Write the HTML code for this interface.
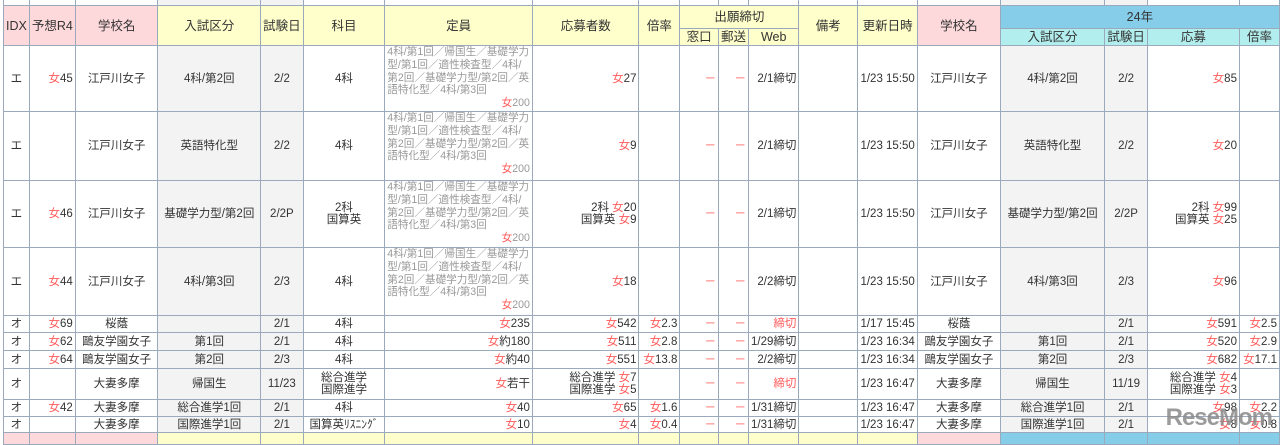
<!DOCTYPE html>
<html><head><meta charset="utf-8"><style>
body{margin:0;width:1280px;height:436px;overflow:hidden;background:#fff;position:relative;font-family:"Liberation Sans","Noto Sans CJK JP",sans-serif;}
table{position:absolute;left:3px;top:-10px;border-collapse:collapse;table-layout:fixed;font-size:11.5px;color:#333;}
td{border:1px solid #9ba9bd;padding:0 2px;text-align:center;vertical-align:middle;overflow:hidden;white-space:nowrap;line-height:12px;}
.h{font-size:12.5px;}
.p{background:#fdd9dc}.y{background:#ffffcc}.b{background:#86cdea}.c{background:#b3eeee}.g{background:#f3f3f3}
.r{text-align:right}.f{color:#ff5a5a}
.t{color:#999;text-align:left;white-space:normal;vertical-align:top;padding:0 2px;font-size:10.6px;line-height:12.8px;}
.t div{text-align:right}
.logo{position:absolute;right:8px;bottom:4px;font:bold 24px "Liberation Sans",sans-serif;color:#8a8a8a;opacity:.85;letter-spacing:-1px}
</style></head><body>
<table>
<colgroup><col style="width:25px"><col style="width:44px"><col style="width:83px"><col style="width:103px"><col style="width:42px"><col style="width:82px"><col style="width:152px"><col style="width:108px"><col style="width:41px"><col style="width:39px"><col style="width:28px"><col style="width:47px"><col style="width:60px"><col style="width:60px"><col style="width:83px"><col style="width:105px"><col style="width:40px"><col style="width:93px"><col style="width:40px"></colgroup>
<tr style="height:15px"><td></td><td></td><td></td><td class="g"></td><td class="g"></td><td></td><td></td><td></td><td></td><td></td><td></td><td></td><td></td><td></td><td></td><td class="g"></td><td class="g"></td><td></td><td></td></tr>
<tr style="height:23px" class="h"><td rowspan="2" class="p">IDX</td><td rowspan="2" class="p">予想R4</td><td rowspan="2" class="p">学校名</td><td rowspan="2" class="y">入試区分</td><td rowspan="2" class="y">試験日</td><td rowspan="2" class="y">科目</td><td rowspan="2" class="y">定員</td><td rowspan="2" class="y">応募者数</td><td rowspan="2" class="y">倍率</td><td colspan="3" class="y">出願締切</td><td rowspan="2" class="y">備考</td><td rowspan="2" class="y">更新日時</td><td rowspan="2" class="p">学校名</td><td colspan="4" class="b">24年</td></tr>
<tr style="height:17px" class="h"><td class="y">窓口</td><td class="y">郵送</td><td class="y">Web</td><td class="c">入試区分</td><td class="c">試験日</td><td class="c">応募</td><td class="c">倍率</td></tr>

<tr style="height:66px"><td>エ</td><td class="r"><span class="f">女</span>45</td><td>江戸川女子</td><td class="g">4科/第2回</td><td class="g">2/2</td><td>4科</td><td class="t">4科/第1回／帰国生／基礎学力型/第1回／適性検査型／4科/第2回／基礎学力型/第2回／英語特化型／4科/第3回<div><span class="f">女</span>200</div></td><td class="r"><span class="f">女</span>27</td><td></td><td class="r f">－</td><td class="r f">－</td><td class="r">2/1締切</td><td></td><td>1/23 15:50</td><td>江戸川女子</td><td class="g">4科/第2回</td><td class="g">2/2</td><td class="r"><span class="f">女</span>85</td><td></td></tr>
<tr style="height:69px"><td>エ</td><td></td><td>江戸川女子</td><td class="g">英語特化型</td><td class="g">2/2</td><td>4科</td><td class="t">4科/第1回／帰国生／基礎学力型/第1回／適性検査型／4科/第2回／基礎学力型/第2回／英語特化型／4科/第3回<div><span class="f">女</span>200</div></td><td class="r"><span class="f">女</span>9</td><td></td><td class="r f">－</td><td class="r f">－</td><td class="r">2/1締切</td><td></td><td>1/23 15:50</td><td>江戸川女子</td><td class="g">英語特化型</td><td class="g">2/2</td><td class="r"><span class="f">女</span>20</td><td></td></tr>
<tr style="height:67px"><td>エ</td><td class="r"><span class="f">女</span>46</td><td>江戸川女子</td><td class="g">基礎学力型/第2回</td><td class="g">2/2P</td><td>2科<br>国算英</td><td class="t">4科/第1回／帰国生／基礎学力型/第1回／適性検査型／4科/第2回／基礎学力型/第2回／英語特化型／4科/第3回<div><span class="f">女</span>200</div></td><td class="r">2科 <span class="f">女</span>20<br>国算英 <span class="f">女</span>9</td><td></td><td class="r f">－</td><td class="r f">－</td><td class="r">2/1締切</td><td></td><td>1/23 15:50</td><td>江戸川女子</td><td class="g">基礎学力型/第2回</td><td class="g">2/2P</td><td class="r">2科 <span class="f">女</span>99<br>国算英 <span class="f">女</span>25</td><td></td></tr>
<tr style="height:68px"><td>エ</td><td class="r"><span class="f">女</span>44</td><td>江戸川女子</td><td class="g">4科/第3回</td><td class="g">2/3</td><td>4科</td><td class="t">4科/第1回／帰国生／基礎学力型/第1回／適性検査型／4科/第2回／基礎学力型/第2回／英語特化型／4科/第3回<div><span class="f">女</span>200</div></td><td class="r"><span class="f">女</span>18</td><td></td><td class="r f">－</td><td class="r f">－</td><td class="r">2/2締切</td><td></td><td>1/23 15:50</td><td>江戸川女子</td><td class="g">4科/第3回</td><td class="g">2/3</td><td class="r"><span class="f">女</span>96</td><td></td></tr>
<tr style="height:17px"><td>オ</td><td class="r"><span class="f">女</span>69</td><td>桜蔭</td><td class="g"></td><td class="g">2/1</td><td>4科</td><td class="r"><span class="f">女</span>235</td><td class="r"><span class="f">女</span>542</td><td class="r"><span class="f">女</span>2.3</td><td class="r f">－</td><td class="r f">－</td><td class="r f">締切</td><td></td><td>1/17 15:45</td><td>桜蔭</td><td class="g"></td><td class="g">2/1</td><td class="r"><span class="f">女</span>591</td><td class="r"><span class="f">女</span>2.5</td></tr>
<tr style="height:18px"><td>オ</td><td class="r"><span class="f">女</span>62</td><td>鷗友学園女子</td><td class="g">第1回</td><td class="g">2/1</td><td>4科</td><td class="r"><span class="f">女</span>約180</td><td class="r"><span class="f">女</span>511</td><td class="r"><span class="f">女</span>2.8</td><td class="r f">－</td><td class="r f">－</td><td class="r">1/29締切</td><td></td><td>1/23 16:34</td><td>鷗友学園女子</td><td class="g">第1回</td><td class="g">2/1</td><td class="r"><span class="f">女</span>520</td><td class="r"><span class="f">女</span>2.9</td></tr>
<tr style="height:18px"><td>オ</td><td class="r"><span class="f">女</span>64</td><td>鷗友学園女子</td><td class="g">第2回</td><td class="g">2/3</td><td>4科</td><td class="r"><span class="f">女</span>約40</td><td class="r"><span class="f">女</span>551</td><td class="r"><span class="f">女</span>13.8</td><td class="r f">－</td><td class="r f">－</td><td class="r">2/2締切</td><td></td><td>1/23 16:34</td><td>鷗友学園女子</td><td class="g">第2回</td><td class="g">2/3</td><td class="r"><span class="f">女</span>682</td><td class="r"><span class="f">女</span>17.1</td></tr>
<tr style="height:31px"><td>オ</td><td></td><td>大妻多摩</td><td class="g">帰国生</td><td class="g">11/23</td><td>総合進学<br>国際進学</td><td class="r"><span class="f">女</span>若干</td><td class="r">総合進学 <span class="f">女</span>7<br>国際進学 <span class="f">女</span>5</td><td></td><td class="r f">－</td><td class="r f">－</td><td class="r f">締切</td><td></td><td>1/23 16:47</td><td>大妻多摩</td><td class="g">帰国生</td><td class="g">11/19</td><td class="r">総合進学 <span class="f">女</span>4<br>国際進学 <span class="f">女</span>3</td><td></td></tr>
<tr style="height:17px"><td>オ</td><td class="r"><span class="f">女</span>42</td><td>大妻多摩</td><td class="g">総合進学1回</td><td class="g">2/1</td><td>4科</td><td class="r"><span class="f">女</span>40</td><td class="r"><span class="f">女</span>65</td><td class="r"><span class="f">女</span>1.6</td><td class="r f">－</td><td class="r f">－</td><td class="r">1/31締切</td><td></td><td>1/23 16:47</td><td>大妻多摩</td><td class="g">総合進学1回</td><td class="g">2/1</td><td class="r"><span class="f">女</span>98</td><td class="r"><span class="f">女</span>2.2</td></tr>
<tr style="height:16px"><td>オ</td><td></td><td>大妻多摩</td><td class="g">国際進学1回</td><td class="g">2/1</td><td>国算英ﾘｽﾆﾝｸﾞ</td><td class="r"><span class="f">女</span>10</td><td class="r"><span class="f">女</span>4</td><td class="r"><span class="f">女</span>0.4</td><td class="r f">－</td><td class="r f">－</td><td class="r">1/31締切</td><td></td><td>1/23 16:47</td><td>大妻多摩</td><td class="g">国際進学1回</td><td class="g">2/1</td><td class="r"><span class="f">女</span>8</td><td class="r"><span class="f">女</span>0.8</td></tr>
<tr style="height:12px"><td class="p"></td><td class="p"></td><td class="p"></td><td class="y"></td><td class="y"></td><td class="y"></td><td class="y"></td><td class="y"></td><td class="y"></td><td class="y"></td><td class="y"></td><td class="y"></td><td class="y"></td><td class="y"></td><td class="p"></td><td class="b"></td><td class="b"></td><td class="b"></td><td class="b"></td></tr>
</table>
<div class="logo">ReseMom</div>
</body></html>
